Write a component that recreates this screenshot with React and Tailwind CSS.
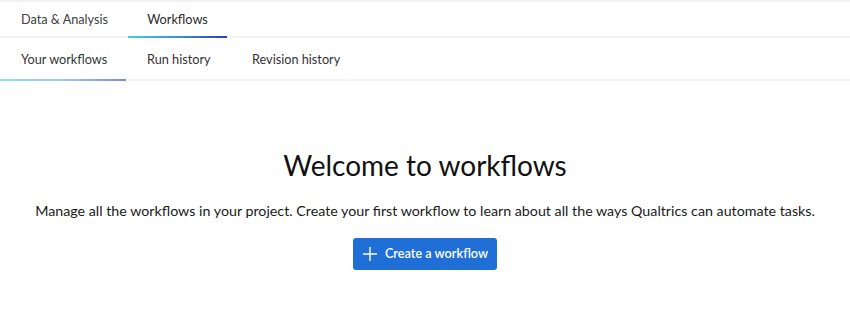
import React from 'react';

const font = { fontFamily: 'Lato, "Noto Sans", Arial, sans-serif' };

const PlusIcon = () => (
  <svg width="16" height="16" viewBox="0 0 16 16" fill="none" stroke="currentColor" strokeWidth="1.4">
    <path d="M8 1v14M1 8h14" />
  </svg>
);

const App = () => {
  return (
    <div className="w-[850px] h-[334px] bg-white text-[#2f2f2f]" style={font}>
      <div className="border-t-2 border-[#f3f3f3]">
        <div className="flex h-[36px] border-b-2 border-[#f3f3f3]">
          <div className="w-[128px] flex items-center pl-[21px] pt-[2px] text-[12.7px] text-[#404040]">
            Data &amp; Analysis
          </div>
          <div className="relative w-[99px] flex items-center justify-center pt-[2px] text-[12.7px] text-[#2a2a2a]">
            Workflows
            <span className="absolute left-0 right-0 -bottom-[2px] h-[2px] bg-gradient-to-r from-[#3fd2d6] via-[#3b8fe6] to-[#2b3db8]" />
          </div>
        </div>
        <div className="flex h-[43px] border-b-2 border-[#f3f3f3]">
          <div className="relative w-[126px] flex items-center pl-[21px] pt-[2px] text-[12.7px] text-[#333]">
            Your workflows
            <span className="absolute left-0 right-0 -bottom-[2px] h-[2px] bg-gradient-to-r from-[#8ee3e0] via-[#9cc8f5] to-[#8088df]" />
          </div>
          <div className="w-[105px] flex items-center pl-[21px] pt-[2px] text-[12.7px] text-[#333]">Run history</div>
          <div className="flex items-center pl-[21px] pt-[2px] text-[12.7px] text-[#333]">Revision history</div>
        </div>
      </div>
      <div className="flex flex-col items-center pt-[66px]">
        <h1 className="text-[28px] leading-[36px] text-[#111]">Welcome to workflows</h1>
        <p className="mt-[18px] text-[14.25px] leading-[20px] text-[#1a1a1a]">
          Manage all the workflows in your project. Create your first workflow to learn about all the ways Qualtrics can automate tasks.
        </p>
        <button className="mt-[17px] h-[32px] w-[144px] flex items-center justify-center gap-[7px] rounded-[3px] bg-[#1f6fd6] text-white text-[12.7px] font-semibold">
          <PlusIcon />
          Create a workflow
        </button>
      </div>
    </div>
  );
};

export default App;
